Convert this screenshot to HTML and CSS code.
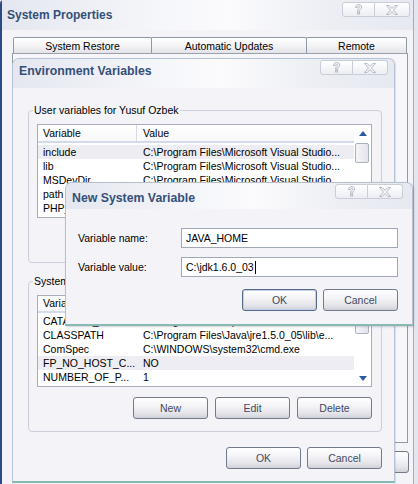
FILE: index.html
```html
<!DOCTYPE html>
<html>
<head>
<meta charset="utf-8">
<link rel="stylesheet" href="styles.css">
</head>
<body>
<div class="win sys">
  <div class="tb sys-tb">
    <span class="title sys-title">System Properties</span>
    <div class="tbtns">
      <div class="tbtn help"><svg width="9" height="11" viewBox="0 0 9 11"><path class="gl" d="M1.5 3.5C1.5 1.6 3 0.5 4.6 0.5 6.6 0.5 7.6 1.8 7.6 3.1 7.6 4.8 5.8 5.2 5.6 6.5L5.6 7.2 3.6 7.2 3.6 6.2C3.8 4.5 5.6 4.2 5.6 3.2 5.6 2.6 5.1 2.3 4.6 2.3 4 2.3 3.5 2.8 3.5 3.5Z"/><rect class="gl" x="3.6" y="8.2" width="2" height="1.8"/></svg></div>
      <div class="tbtn close"><svg width="12" height="10" viewBox="0 0 12 10"><polygon class="gl" points="0.5,0.5 3.2,0.5 6,3.4 8.8,0.5 11.5,0.5 7.5,5 11.5,9.5 8.8,9.5 6,6.6 3.2,9.5 0.5,9.5 4.5,5"/></svg></div>
    </div>
  </div>
  <div class="tabs">
    <div class="tab t1">System Restore</div>
    <div class="tab t2">Automatic Updates</div>
    <div class="tab t3">Remote</div>
  </div>
  <div class="tabpage"></div>
  <div class="sys-btns">
    <div class="btn">OK</div>
    <div class="btn">Cancel</div>
    <div class="btn">Apply</div>
  </div>
</div>

<div class="win env">
  <div class="tb env-tb">
    <span class="title">Environment Variables</span>
    <div class="tbtns">
      <div class="tbtn help"><svg width="9" height="11" viewBox="0 0 9 11"><path class="gl" d="M1.5 3.5C1.5 1.6 3 0.5 4.6 0.5 6.6 0.5 7.6 1.8 7.6 3.1 7.6 4.8 5.8 5.2 5.6 6.5L5.6 7.2 3.6 7.2 3.6 6.2C3.8 4.5 5.6 4.2 5.6 3.2 5.6 2.6 5.1 2.3 4.6 2.3 4 2.3 3.5 2.8 3.5 3.5Z"/><rect class="gl" x="3.6" y="8.2" width="2" height="1.8"/></svg></div>
      <div class="tbtn close"><svg width="12" height="10" viewBox="0 0 12 10"><polygon class="gl" points="0.5,0.5 3.2,0.5 6,3.4 8.8,0.5 11.5,0.5 7.5,5 11.5,9.5 8.8,9.5 6,6.6 3.2,9.5 0.5,9.5 4.5,5"/></svg></div>
    </div>
  </div>
  <div class="env-body">
    <div class="group g1">
      <span class="glabel">User variables for Yusuf Ozbek</span>
      <div class="lv lv1">
        <div class="lv-main">
          <div class="lvh"><div class="c1 hc">Variable</div><div class="c2">Value</div></div>
          <div class="rows">
            <div class="row sel"><div class="c1">include</div><div class="c2">C:\Program Files\Microsoft Visual Studio...</div></div>
            <div class="row"><div class="c1">lib</div><div class="c2">C:\Program Files\Microsoft Visual Studio...</div></div>
            <div class="row"><div class="c1">MSDevDir</div><div class="c2">C:\Program Files\Microsoft Visual Studio...</div></div>
            <div class="row"><div class="c1">path</div><div class="c2">C:\Program Files\Microsoft Visual Studio...</div></div>
            <div class="row"><div class="c1">PHP_PEAR</div><div class="c2">C:\php5\PEAR</div></div>
          </div>
        </div>
        <div class="sb">
          <div class="sb-btn"><svg width="8" height="5" viewBox="0 0 8 5"><polygon class="arr" points="0,5 4,0 8,5"/></svg></div>
          <div class="sb-track"><div class="thumb"></div></div>
          <div class="sb-btn"><svg width="8" height="5" viewBox="0 0 8 5"><polygon class="arr" points="0,0 8,0 4,5"/></svg></div>
        </div>
      </div>
      <div class="gbtns">
        <div class="btn">New</div>
        <div class="btn">Edit</div>
        <div class="btn">Delete</div>
      </div>
    </div>

    <div class="group g2">
      <span class="glabel">System variables</span>
      <div class="lv lv2">
        <div class="lv-main">
          <div class="lvh"><div class="c1 hc">Variable</div><div class="c2">Value</div></div>
          <div class="rows">
            <div class="row"><div class="c1">CATALINA_HOME</div><div class="c2">C:\Program Files\Apache Software Found...</div></div>
            <div class="row"><div class="c1">CLASSPATH</div><div class="c2">C:\Program Files\Java\jre1.5.0_05\lib\e...</div></div>
            <div class="row"><div class="c1">ComSpec</div><div class="c2">C:\WINDOWS\system32\cmd.exe</div></div>
            <div class="row sel"><div class="c1">FP_NO_HOST_C...</div><div class="c2">NO</div></div>
            <div class="row"><div class="c1">NUMBER_OF_P...</div><div class="c2">1</div></div>
          </div>
        </div>
        <div class="sb">
          <div class="sb-btn"><svg width="8" height="5" viewBox="0 0 8 5"><polygon class="arr" points="0,5 4,0 8,5"/></svg></div>
          <div class="sb-track"><div class="thumb"></div></div>
          <div class="sb-btn"><svg width="8" height="5" viewBox="0 0 8 5"><polygon class="arr" points="0,0 8,0 4,5"/></svg></div>
        </div>
      </div>
      <div class="gbtns">
        <div class="btn">New</div>
        <div class="btn">Edit</div>
        <div class="btn">Delete</div>
      </div>
    </div>

    <div class="env-btns">
      <div class="btn">OK</div>
      <div class="btn">Cancel</div>
    </div>
  </div>
</div>

<div class="win nsv">
  <div class="tb nsv-tb">
    <span class="title">New System Variable</span>
    <div class="tbtns">
      <div class="tbtn help"><svg width="9" height="11" viewBox="0 0 9 11"><path class="gl" d="M1.5 3.5C1.5 1.6 3 0.5 4.6 0.5 6.6 0.5 7.6 1.8 7.6 3.1 7.6 4.8 5.8 5.2 5.6 6.5L5.6 7.2 3.6 7.2 3.6 6.2C3.8 4.5 5.6 4.2 5.6 3.2 5.6 2.6 5.1 2.3 4.6 2.3 4 2.3 3.5 2.8 3.5 3.5Z"/><rect class="gl" x="3.6" y="8.2" width="2" height="1.8"/></svg></div>
      <div class="tbtn close"><svg width="12" height="10" viewBox="0 0 12 10"><polygon class="gl" points="0.5,0.5 3.2,0.5 6,3.4 8.8,0.5 11.5,0.5 7.5,5 11.5,9.5 8.8,9.5 6,6.6 3.2,9.5 0.5,9.5 4.5,5"/></svg></div>
    </div>
  </div>
  <div class="nsv-body">
    <div class="frow"><span class="flabel">Variable name:</span><div class="tbox">JAVA_HOME</div></div>
    <div class="frow r2"><span class="flabel">Variable value:</span><div class="tbox">C:\jdk1.6.0_03<span class="caret"></span></div></div>
    <div class="nsv-btns">
      <div class="btn default">OK</div>
      <div class="btn">Cancel</div>
    </div>
  </div>
</div>
</body>
</html>
```

FILE: styles.css
```css
* { box-sizing: border-box; }
html, body { margin: 0; padding: 0; }
body {
  width: 418px;
  height: 484px;
  overflow: hidden;
  position: relative;
  background: #e3e6ee;
  font-family: "Liberation Sans", Arial, sans-serif;
  font-size: 10.5px;
  color: #000;
}

.win {
  position: absolute;
  background: #f3f3f8;
  display: flex;
  flex-direction: column;
}

/* ---- title bars ---- */
.tb {
  display: flex;
  align-items: flex-start;
  background: linear-gradient(to right, #e4e7ef 0%, #f6f7fb 40%, #fbfbfd 55%, #eceef4 80%, #e6e9f0 100%);
  flex: none;
}
.title {
  font-weight: bold;
  font-size: 12.3px;
  color: #34507a;
  line-height: 14px;
  white-space: nowrap;
}
.tbtns { display: flex; margin-left: auto; height: 15px; }
.tbtn {
  height: 15px;
  border: 1px solid #c8cdd8;
  background: linear-gradient(#ffffff, #eceef3);
  display: flex;
  align-items: center;
  justify-content: center;
}
.tbtn.help { width: 33px; border-radius: 3px 0 0 3px; }
.tbtn.close { width: 35px; border-left: none; border-radius: 0 3px 3px 0; }
.gl { fill: #f4f5f8; stroke: #aeb3c1; stroke-width: 0.9; }

/* ---- buttons ---- */
.btn {
  width: 75px;
  height: 22px;
  border: 1px solid #737b8a;
  border-radius: 3px;
  background: linear-gradient(#ffffff 0%, #f4f4f7 40%, #e2e2e8 80%, #cfd0d8 100%);
  box-shadow: inset 0 1px 0 #fff;
  display: flex;
  align-items: center;
  justify-content: center;
  color: #3f4a60;
  flex: none;
}
.btn.default { border-color: #55698a; box-shadow: inset 0 0 0 1px #c4d0e4; }

/* ---- System Properties ---- */
.sys {
  left: 0; top: 0;
  width: 414px; height: 490px;
  border-left: 2px solid #2b4a86;
  border-right: 1px solid #a3adc0;
  border-top-left-radius: 4px;
}
.sys-tb { height: 30px; padding: 2px 3px 0 5px; }
.sys-title { margin-top: 6px; font-size: 12px; }
.tabs { display: flex; margin-top: 7px; padding-left: 11px; flex: none; }
.tab {
  height: 16px;
  line-height: 16px;
  text-align: center;
  border: 1px solid #8e99a6;
  border-bottom: none;
  background: linear-gradient(#ffffff 0%, #f4f4f6 50%, #e3e3e8 100%);
  border-radius: 2px 2px 0 0;
  white-space: nowrap;
}
.tab + .tab { margin-left: -1px; }
.t1 { width: 139px; }
.t2 { width: 156px; }
.t3 { width: 101px; }
.tabpage {
  margin-left: 10px;
  width: 396px;
  height: 390px;
  border: 1px solid #919b9c;
  border-top-color: #9aa3ad;
  background: #f7f7fb;
  flex: none;
}
.sys-btns { display: flex; justify-content: flex-end; gap: 6px; margin-top: 8px; padding-right: 4px; }

/* ---- Environment Variables ---- */
.env {
  left: 12px; top: 58px;
  width: 383px; height: 425px;
  border: 1px solid #b5c3d6;
  border-bottom: 2px solid #86b9b1;
  border-radius: 7px 7px 0 0;
  box-shadow: 1px 0 1px rgba(80, 90, 110, 0.15);
}
.env-tb { height: 29px; padding: 1px 6px 0 6px; border-radius: 6px 6px 0 0; }
.env-tb .title { margin-top: 4px; }
.env-body { padding: 0 12px 0 15px; display: flex; flex-direction: column; }

.group {
  position: relative;
  border: 1px solid #cbcfda;
  border-radius: 4px;
  padding: 13px 9px 12px 8px;
  display: flex;
  flex-direction: column;
  gap: 10px;
}
.g1 { margin-top: 22px; }
.g2 { margin-top: 18px; }
.glabel {
  position: absolute;
  top: -7px;
  left: 4px;
  padding: 0 1px;
  line-height: 13px;
  background: #f3f3f8;
  white-space: nowrap;
}
.lv {
  width: 335px;
  border: 1px solid #a7aeba;
  background: #fff;
  display: flex;
}
.lv1 { height: 94px; }
.lv2 { height: 92px; }
.lv-main { width: 316px; overflow: hidden; flex: none; }
.lvh {
  display: flex;
  height: 18px;
  line-height: 16px;
  border-bottom: 2px solid #d3dae8;
  background: linear-gradient(#ffffff, #f8f8fa);
}
.lv2 .lvh { height: 17px; line-height: 15px; }
.lvh .hc { border-right: 1px solid #d8d9e0; box-shadow: 1px 0 0 #fff; }
.rows { margin-top: 2px; }
.lv2 .rows { margin-top: 1px; }
.row { display: flex; height: 14px; line-height: 14px; }
.row.sel { background: #ededf3; }
.c1 { width: 99px; padding-left: 5px; white-space: nowrap; overflow: hidden; flex: none; }
.c2 { padding-left: 6px; white-space: nowrap; overflow: hidden; flex: 1; }
.sb { width: 17px; display: flex; flex-direction: column; flex: none; background: #fff; }
.sb-btn { height: 16px; display: flex; align-items: center; justify-content: center; flex: none; }
.sb-track { flex: 1; padding: 2px 0 0 1px; }
.thumb {
  width: 14px; height: 20px;
  border: 1px solid #aab1c1;
  border-radius: 2px;
  background: linear-gradient(to right, #f5f5f8, #e3e4ea);
}
.arr { fill: #2d5c9e; }
.gbtns { display: flex; justify-content: flex-end; gap: 7px; }
.env-btns { display: flex; justify-content: flex-end; gap: 6px; margin-top: 15px; }

/* ---- New System Variable ---- */
.nsv {
  left: 65px; top: 182px;
  width: 348px; height: 144px;
  border: 1px solid #b8bfcb;
  border-bottom: 2px solid #88b9b2;
  border-radius: 7px 7px 0 0;
  box-shadow: 1px 1px 2px rgba(70, 80, 100, 0.25);
}
.nsv-tb { height: 26px; padding: 1px 9px 0 6px; border-radius: 6px 6px 0 0; }
.nsv-tb .title { margin-top: 7px; }
.nsv-body { padding: 19px 14px 0 12px; display: flex; flex-direction: column; }
.frow { display: flex; align-items: center; height: 20px; }
.frow.r2 { margin-top: 9px; }
.flabel { width: 103px; flex: none; white-space: nowrap; }
.tbox {
  width: 217px;
  height: 20px;
  border: 1px solid #a0a8b6;
  background: #fff;
  padding-left: 4px;
  line-height: 18px;
  white-space: nowrap;
  display: flex;
  align-items: center;
}
.caret { display: inline-block; width: 1px; height: 13px; background: #000; margin-left: 1px; }
.nsv-btns { display: flex; justify-content: flex-end; gap: 6px; margin-top: 12px; }
```
